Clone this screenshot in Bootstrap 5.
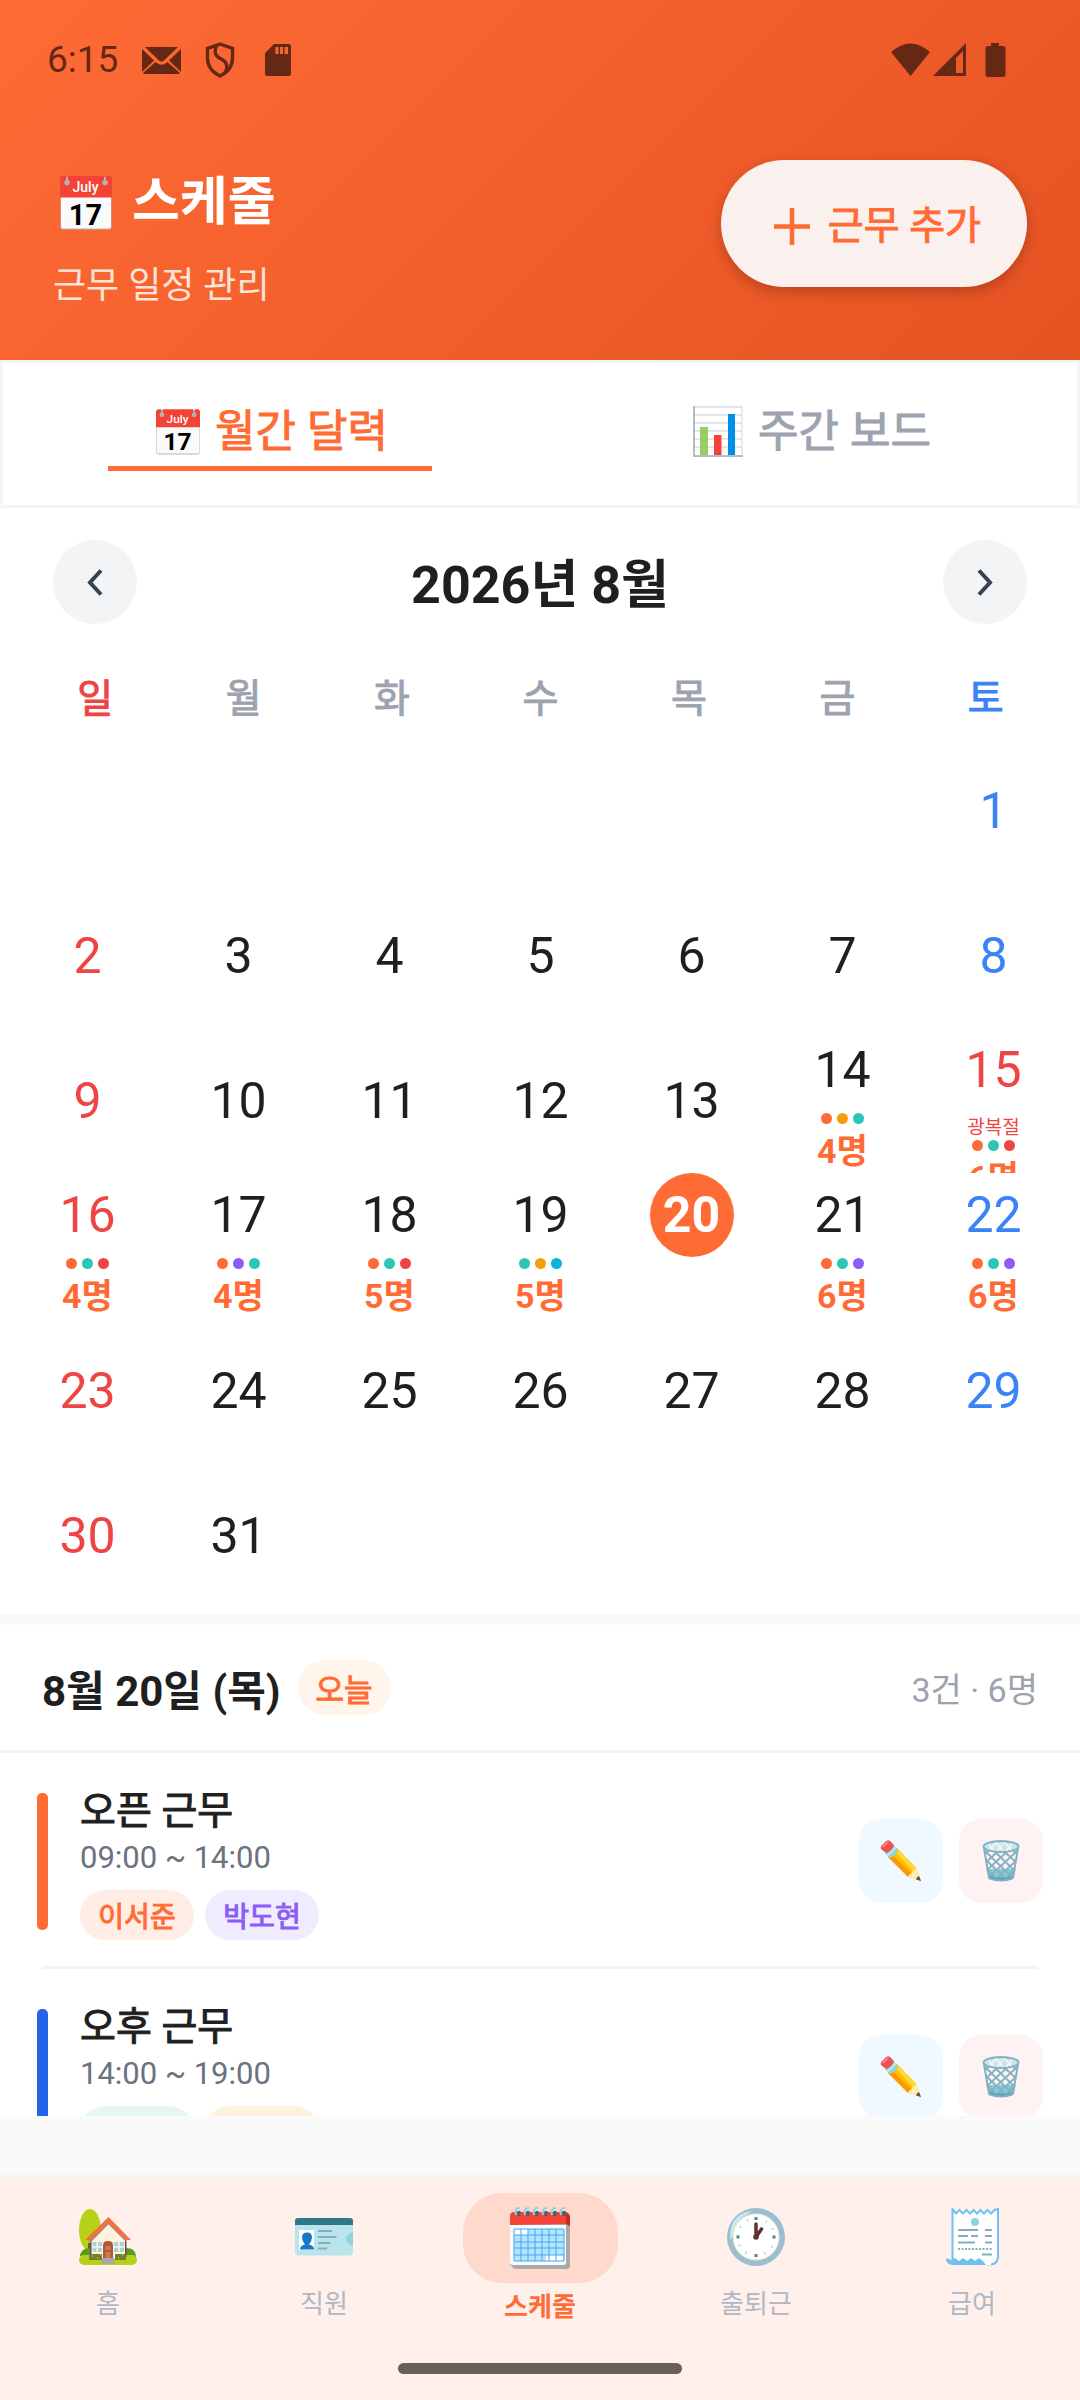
<!DOCTYPE html>
<html lang="ko">
<head>
<meta charset="utf-8">
<meta name="viewport" content="width=device-width, initial-scale=1">
<title>스케줄</title>
<link href="https://cdn.jsdelivr.net/npm/bootstrap@5.3.0/dist/css/bootstrap.min.css" rel="stylesheet">
<style>
:root{--brand:#ff6b35;--ink:#1f1f1f;--muted:#9ca3af}
body{font-family:Roboto,"Noto Sans CJK KR",sans-serif;color:var(--ink);background:#fafafa}
button{font-family:inherit}
/* semi-bold look for Hangul, between the regular and bold cuts */
.add-btn,.view-tab,.weekdays,.today-pill,.shift-name,.chip{font-weight:400;-webkit-text-stroke:1px currentColor}
.app-shell{height:100vh;overflow:hidden}
.app-header{background:linear-gradient(135deg,#ff6b35,#e55323);padding-bottom:49px;flex:none}
.status-bar{height:120px;padding:0 74px 0 47px;color:#652815}
.status-time{font-size:37px;line-height:44px;margin-right:24px}
.status-bar svg{display:block}
.header-row{padding:40px 53px 0}
.header-text{padding-top:3px}
.page-title{font-size:52px;line-height:80px;font-weight:700;color:#fff;gap:20px}
.page-title svg{margin-left:7px}
.page-sub{font-size:36px;line-height:50px;margin-top:18px;color:#ffe3d9}
.add-btn{height:127px;padding:6px 46px 0 53px;border:0;border-radius:64px;background:#faf0ed;color:var(--brand);font-size:39px;gap:18px;box-shadow:0 5px 14px rgba(80,20,0,.3)}
.view-tabs{height:148px;flex:none;background:#fff;box-shadow:inset 0 0 0 3px #f3f4f6}
.view-tab{border:0;background:none;font-size:44px;line-height:64px;color:var(--muted);gap:15px;padding:32px 0 0 4px;height:111px}
.view-tab.active{color:var(--brand);position:relative}
.view-tab.active::after{content:"";position:absolute;left:20%;right:20%;bottom:0;height:5px;background:var(--brand)}
.month-nav{padding:32px 53px}
.nav-round{width:84px;height:84px;border:0;border-radius:50%;background:#f3f4f6;padding:0}
.month-title{font-size:52px;line-height:72px;font-weight:700;padding-top:8px}
.weekdays,.month-grid{display:grid;grid-template-columns:repeat(7,1fr)}
.weekdays{padding:21px 20px 17px 21px;font-size:39px;line-height:44px;color:var(--muted);text-align:center}
.month-grid{padding:0 11px 6px 12px;grid-auto-rows:145px}
.day-cell{border:0;background:none;padding:0;overflow:hidden;color:var(--ink);display:flex;flex-direction:column;align-items:center;justify-content:center}
.day-cell.has-shifts{justify-content:flex-start}
.day-num{flex:none;width:84px;height:84px;border-radius:50%;font-size:50px;line-height:85px;text-align:center}
.is-sun{color:#ef4444}.is-sat{color:#3b82f6}
.is-today .day-num{background:var(--brand);color:#fff;font-weight:700}
.holiday{font-size:19px;line-height:31px;height:27px;flex:none}
.dots{gap:5px;flex:none;margin-top:1px}
.dots i{width:11px;height:11px;border-radius:50%}
.d-o{background:#ff6b35}.d-t{background:#2ec4b6}.d-r{background:#ef4444}.d-p{background:#8b5cf6}.d-y{background:#f59e0b}.d-c{background:#06b6d4}
.head-count{font-size:34px;line-height:44px;font-weight:700;color:var(--brand);margin-top:5px;flex:none}
.day-panel{margin-top:11px;margin-bottom:63px;min-height:0;overflow:hidden}
.day-head{height:128px;padding:0 42px;border-bottom:3px solid #f3f4f6}
.day-date{font-size:42px;line-height:60px;font-weight:700;padding-top:8px}
.today-pill{height:55px;line-height:61px;padding:0 18px;border-radius:28px;background:#fff5eb;color:var(--brand);font-size:31px;margin-left:17px}
.day-sum{font-size:34px;color:var(--muted);padding-top:5px}
.shift-row{padding:29px 37px 26px;gap:32px}
.shift-rule{height:3px;margin:0 42px;background:#f3f4f6}
.shift-bar{width:11px;height:137px;border-radius:5px;align-self:center;flex:none}
.shift-name{font-size:39px;line-height:54px;padding-top:2px}
.shift-time{font-size:31px;line-height:40px;color:#6b7280}
.chips{gap:11px;margin-top:12px}
.chip{height:50px;min-width:114px;line-height:56px;padding:0 18px;border-radius:25px;font-size:28px;text-align:center}
.chip-o{background:#ffede6;color:#ff6b35}.chip-p{background:#f0ebfe;color:#8b5cf6}.chip-t{background:#e5f7f5}.chip-y{background:#fef1df}
.icon-btn{width:84px;height:84px;border:0;border-radius:22px;padding:0}
.icon-btn.edit{background:#f0f9ff}.icon-btn.del{background:#fef2f2}
.bottom-nav{height:221px;background:#fff0eb;box-shadow:0 -2px 6px rgba(0,0,0,.05);padding-top:14px}
.nav-tab{color:#b0b8c6;font-size:26px;line-height:38px;text-decoration:none;gap:5px}
.nav-icon{width:155px;height:87px;border-radius:39px}
.nav-tab.active{color:var(--brand);font-weight:700}
.nav-tab.active .nav-icon{height:90px;background:#ffd9cc}
.home-bar{width:284px;height:11px;border-radius:6px;background:#68605c;margin:0 auto 26px}
</style>
<script src="https://cdn.jsdelivr.net/npm/bootstrap@5.3.0/dist/js/bootstrap.bundle.min.js"></script>
</head>
<body>
<svg width="0" height="0" class="position-absolute" aria-hidden="true">
  <defs>
    <symbol id="i-july" viewBox="0 0 52 54">
      <rect x=".5" y="1" width="51" height="52.5" rx="2.5" fill="#b0b4b6"/>
      <rect x="1" y="12" width="50" height="40.5" rx="2" fill="#fafafa"/>
      <path d="M3 0h3v4a2.8 2.8 0 1 0 2 0V0h36v4a2.8 2.8 0 1 0 2 0V0h3q3 0 3 3v18.500H0V3q0-3 3-3z" fill="#f44336"/>
      <g stroke="none"><text x="25.500" y="16" font-family="Roboto" font-weight="500" font-size="14" text-anchor="middle" fill="#fff">July</text>
      <text x="25.500" y="48.500" font-family="Roboto" font-weight="700" font-size="29" text-anchor="middle" fill="#000">17</text></g>
    </symbol>
    <symbol id="i-pencil" viewBox="0 0 42 42">
      <path d="M8 17L17 8 36.500 28 41 41 28 36.500z" fill="#ffc107"/>
      <path d="M8 17l3.500-3.500L32 34l-4 3z" fill="#ff9800"/>
      <path d="M14 10.500L17 8l20 21-3 3z" fill="#ffd835"/>
      <path d="M37 28.500L41 41 28 36.500q1.500-3 4-3.500.5-3 5-4.500z" fill="#ffecb3"/>
      <path d="M39 36l2 5-5-1.500q.5-3 3-3.500z" fill="#555"/>
      <path d="M5 13l8-8 5 5q-1 5-8 8z" fill="#90d2de"/>
      <path d="M7.500 15.500l8-8" stroke="#c5e8ee" stroke-width="2"/>
      <path d="M1 9Q0 7 2 5l3-3q3-3 5-1l4 4q-1 5-8 8z" fill="#ef5350"/>
      <path d="M2 6l4-4q2-1 3 0L3 8z" fill="#f48384"/>
    </symbol>
    <symbol id="i-trash" viewBox="0 0 38 42">
      <path d="M5 29h28l-2.500 10q-11.500 4-23 0z" fill="#82cbd9"/>
      <path d="M6.500 35q12 5 25 0l-1 4q-11.500 4-23 0z" fill="#5398ab"/>
      <path d="M3 14l7-6M4 22L20 8M5 30L29 8M7 37L35 11M15 38L34 21M24 38l9-8M28 8l7 6M18 8l16 14M9 8l24 23M3 11l28 27M4 20l19 18M5 29l9 9" stroke="#82b1c4" stroke-width="1.800" fill="none"/>
      <path d="M2 8l5 30q12 5 24 0l5-30" fill="none" stroke="#82b1c4" stroke-width="2"/>
      <ellipse cx="19" cy="6.500" rx="17.500" ry="5.500" fill="#c5e6ec" stroke="#82b1c4" stroke-width="2"/>
      <path d="M7 5l5 5M14 3l7 8M23 3l6 7M30 4l-6 7M22 3l-7 8M14 3L8 9" stroke="#fef2f2" stroke-width="1.600"/>
    </symbol>
  </defs>
</svg>

<div class="app-shell d-flex flex-column">
  <header class="app-header">
    <div class="status-bar d-flex align-items-center">
      <span class="status-time">6:15</span>
      <svg width="39" height="27" viewBox="0 0 39 27" fill="currentColor"><path d="M3 0h33l-14 13.500q-2.500 2-5 0zM0 2l12 11.500L0 25zM39 2L27 13.500 39 25zM13.500 15q6 5.500 12 0L38 26q-1 1-2 1H3q-1 0-2-1z"/></svg>
      <svg class="ms-4" width="30" height="36" viewBox="0 0 30 36" fill="none" stroke="currentColor" stroke-width="3.400"><path d="M15 2L2.500 6.500V16Q2.500 28 15 34 27.500 28 27.500 16V6.500z"/><path d="M12 3Q7 13 16 17 25 21 20 31"/></svg>
      <svg class="ms-auto me-0 order-1" width="115" height="35" viewBox="0 0 115 35" fill="currentColor"><path d="M0 9Q19.500-8 39 9L19.500 33z"/><path d="M75 0v33H42zm-3 8l-7 7v15h7z" fill-rule="evenodd"/><path d="M100 0h8v3h4q2.500 0 2.500 2.500v26q0 2.500-2.500 2.500H97q-2.500 0-2.500-2.500v-26Q94.500 3 97 3h3z"/></svg>
      <svg width="56" height="32" viewBox="-30 0 56 32" fill="currentColor"><path fill-rule="evenodd" d="M9 0h14.500Q26 0 26 2.500v27Q26 32 23.500 32h-21Q0 32 0 29.500V9zm1.500 3v7h3V3zm4.500 0v7h3V3zm4.500 0v7H23V3z"/></svg>
    </div>
    <div class="header-row d-flex justify-content-between align-items-start">
      <div class="header-text">
        <h1 class="page-title d-flex align-items-center m-0"><svg width="52" height="54"><use href="#i-july"/></svg>스케줄</h1>
        <p class="page-sub mb-0">근무 일정 관리</p>
      </div>
      <button type="button" class="add-btn d-flex align-items-center"><svg width="36" height="37" viewBox="0 0 36 37" stroke="currentColor" stroke-width="4.500" aria-hidden="true"><path d="M18 0v37M0 18.500h36"/></svg>근무 추가</button>
    </div>
  </header>

  <nav class="view-tabs d-flex">
    <button type="button" class="view-tab active flex-fill w-50 d-flex justify-content-center align-items-center"><svg width="44" height="46"><use href="#i-july"/></svg>월간 달력</button>
    <button type="button" class="view-tab flex-fill w-50 d-flex justify-content-center align-items-center">
      <svg width="50" height="51" viewBox="0 0 50 51"><path fill="#fff" d="M0 0h50v51H0z"/><path d="M0 1h49M0 9h49M0 17h49M0 25h49M0 33h49M0 41h49" stroke="#c3ced3"/><path d="M49 0v50" stroke="#cfd8dc"/><path d="M1 0v50h49" stroke="#b0bec5" stroke-width="2" fill="none"/><path fill="#9ccc65" d="M7 21h8v28H7z"/><path fill="#f44336" d="M21 29h7.500v20H21z"/><path fill="#0090ea" d="M35 8h7v41h-7z"/></svg>주간 보드</button>
  </nav>

  <main class="bg-white flex-shrink-0">
    <div class="month-nav d-flex justify-content-between align-items-center">
      <button type="button" class="nav-round d-flex align-items-center justify-content-center" aria-label="이전 달"><svg width="16" height="27" viewBox="0 0 16 27" fill="none" stroke="#374151" stroke-width="4"><path d="M14 1.500L3 13.500l11 12"/></svg></button>
      <h2 class="month-title mb-0">2026년 8월</h2>
      <button type="button" class="nav-round d-flex align-items-center justify-content-center" aria-label="다음 달"><svg width="16" height="27" viewBox="0 0 16 27" fill="none" stroke="#374151" stroke-width="4"><path d="M2 1.500l11 12-11 12"/></svg></button>
    </div>
    <div class="weekdays"><span class="is-sun">일</span><span>월</span><span>화</span><span>수</span><span>목</span><span>금</span><span class="is-sat">토</span></div>
    <div class="month-grid">
      <span></span><span></span><span></span><span></span><span></span><span></span>
      <button type="button" class="day-cell is-sat"><span class="day-num">1</span></button>
      <button type="button" class="day-cell is-sun"><span class="day-num">2</span></button>
      <button type="button" class="day-cell"><span class="day-num">3</span></button>
      <button type="button" class="day-cell"><span class="day-num">4</span></button>
      <button type="button" class="day-cell"><span class="day-num">5</span></button>
      <button type="button" class="day-cell"><span class="day-num">6</span></button>
      <button type="button" class="day-cell"><span class="day-num">7</span></button>
      <button type="button" class="day-cell is-sat"><span class="day-num">8</span></button>
      <button type="button" class="day-cell is-sun"><span class="day-num">9</span></button>
      <button type="button" class="day-cell"><span class="day-num">10</span></button>
      <button type="button" class="day-cell"><span class="day-num">11</span></button>
      <button type="button" class="day-cell"><span class="day-num">12</span></button>
      <button type="button" class="day-cell"><span class="day-num">13</span></button>
      <button type="button" class="day-cell has-shifts"><span class="day-num">14</span><span class="dots d-flex"><i class="d-o"></i><i class="d-y"></i><i class="d-t"></i></span><span class="head-count">4명</span></button>
      <button type="button" class="day-cell has-shifts is-sun"><span class="day-num">15</span><span class="holiday">광복절</span><span class="dots d-flex"><i class="d-o"></i><i class="d-t"></i><i class="d-r"></i></span><span class="head-count">6명</span></button>
      <button type="button" class="day-cell has-shifts is-sun"><span class="day-num">16</span><span class="dots d-flex"><i class="d-o"></i><i class="d-t"></i><i class="d-r"></i></span><span class="head-count">4명</span></button>
      <button type="button" class="day-cell has-shifts"><span class="day-num">17</span><span class="dots d-flex"><i class="d-o"></i><i class="d-p"></i><i class="d-t"></i></span><span class="head-count">4명</span></button>
      <button type="button" class="day-cell has-shifts"><span class="day-num">18</span><span class="dots d-flex"><i class="d-o"></i><i class="d-t"></i><i class="d-r"></i></span><span class="head-count">5명</span></button>
      <button type="button" class="day-cell has-shifts"><span class="day-num">19</span><span class="dots d-flex"><i class="d-t"></i><i class="d-y"></i><i class="d-c"></i></span><span class="head-count">5명</span></button>
      <button type="button" class="day-cell has-shifts is-today"><span class="day-num">20</span></button>
      <button type="button" class="day-cell has-shifts"><span class="day-num">21</span><span class="dots d-flex"><i class="d-o"></i><i class="d-t"></i><i class="d-p"></i></span><span class="head-count">6명</span></button>
      <button type="button" class="day-cell has-shifts is-sat"><span class="day-num">22</span><span class="dots d-flex"><i class="d-o"></i><i class="d-t"></i><i class="d-p"></i></span><span class="head-count">6명</span></button>
      <button type="button" class="day-cell is-sun"><span class="day-num">23</span></button>
      <button type="button" class="day-cell"><span class="day-num">24</span></button>
      <button type="button" class="day-cell"><span class="day-num">25</span></button>
      <button type="button" class="day-cell"><span class="day-num">26</span></button>
      <button type="button" class="day-cell"><span class="day-num">27</span></button>
      <button type="button" class="day-cell"><span class="day-num">28</span></button>
      <button type="button" class="day-cell is-sat"><span class="day-num">29</span></button>
      <button type="button" class="day-cell is-sun"><span class="day-num">30</span></button>
      <button type="button" class="day-cell"><span class="day-num">31</span></button>
    </div>
  </main>

  <section class="day-panel bg-white flex-fill">
    <div class="day-head d-flex align-items-center">
      <h3 class="day-date mb-0">8월 20일 (목)</h3><span class="today-pill">오늘</span>
      <span class="day-sum ms-auto">3건 · 6명</span>
    </div>
    <article class="shift-row d-flex">
      <span class="shift-bar" style="background:#ff6b35"></span>
      <div class="flex-fill">
        <h4 class="shift-name mb-0">오픈 근무</h4>
        <div class="shift-time">09:00 ~ 14:00</div>
        <div class="chips d-flex"><span class="chip chip-o">이서준</span><span class="chip chip-p">박도현</span></div>
      </div>
      <div class="d-flex gap-3 align-self-center">
        <button type="button" class="icon-btn edit" aria-label="수정"><svg width="42" height="42"><use href="#i-pencil"/></svg></button>
        <button type="button" class="icon-btn del" aria-label="삭제"><svg width="38" height="42"><use href="#i-trash"/></svg></button>
      </div>
    </article>
    <div class="shift-rule"></div>
    <article class="shift-row d-flex">
      <span class="shift-bar" style="background:#2563eb"></span>
      <div class="flex-fill">
        <h4 class="shift-name mb-0">오후 근무</h4>
        <div class="shift-time">14:00 ~ 19:00</div>
        <div class="chips d-flex"><span class="chip chip-t"></span><span class="chip chip-y"></span></div>
      </div>
      <div class="d-flex gap-3 align-self-center">
        <button type="button" class="icon-btn edit" aria-label="수정"><svg width="42" height="42"><use href="#i-pencil"/></svg></button>
        <button type="button" class="icon-btn del" aria-label="삭제"><svg width="38" height="42"><use href="#i-trash"/></svg></button>
      </div>
    </article>
  </section>

  <footer class="bottom-nav d-flex flex-column justify-content-between flex-shrink-0">
    <nav class="row g-0">
      <a href="#" class="nav-tab col d-flex flex-column align-items-center"><span class="nav-icon d-flex align-items-center justify-content-center">
        <svg width="58" height="56" viewBox="0 0 58 56"><ellipse cx="11" cy="21" rx="11" ry="21" fill="#b7d118"/><path d="M9 34h4v13H9z" fill="#795548"/><path d="M1 47q1-8 10-8l36 0q10 0 10 9z" fill="#5a9a1e"/><rect y="46" width="58" height="10" rx="5" fill="#b7d118"/><path d="M11 32L29.500 14 47 32v18H11z" fill="#fff3e0"/><path d="M11 32v16h1.500V32zM46 32v16h1.500V32z" fill="#6d4c41"/><path d="M10 32L29.500 12.500 48 31" stroke="#a98a75" stroke-width="4" fill="none"/><path d="M6 31L29.500 8 52 31l-5 0L29.500 13.500 11 31z" fill="#f4703c"/><path d="M13.500 33h9.500v10h-9.500zM35 33h10v10H35z" fill="#a5d3d8"/><path d="M18.200 33v10M13.500 38H23M40 33v10M35 38h10" stroke="#fff3e0" stroke-width="1.500"/><path d="M24 50V36q0-4 5-4t5 4v14z" fill="#b1573a"/><path d="M26.500 37h5v4h-5zM26.500 43h5v6h-5z" fill="#cf7752"/><path d="M10 45h13v6H10zM36 45h11v6H36z" fill="#71802f"/><path d="M13 47h1M18 49h1M21 46h1M39 49h1M43 46h1" stroke="#ffb300" stroke-width="1.500"/><path d="M23 49h12l1 6H22z" fill="#a8a8a8"/></svg></span><span>홈</span></a>
      <a href="#" class="nav-tab col d-flex flex-column align-items-center"><span class="nav-icon d-flex align-items-center justify-content-center">
        <svg width="58" height="38" viewBox="0 0 58 38"><rect width="58" height="37.500" rx="3" fill="#b9e4ea"/><path d="M0 7V3q0-3 3-3h52q3 0 3 3v4z" fill="#2f7889"/><path d="M4 12h15v20H4z" fill="#fff"/><path d="M5 31.500q0-4 5-5-3-4-3-7 0-5 5-5t5 5q0 3-3 7 5 1 5 5z" fill="#1479c7"/><path d="M23 13h14M23 19h18.500M23 25h12.500M23 30.500h9" stroke="#82aec0" stroke-width="2"/><path d="M58 14q-7 2-7 7t7 7z" fill="#94d1e0"/></svg></span><span>직원</span></a>
      <a href="#" class="nav-tab active col d-flex flex-column align-items-center"><span class="nav-icon d-flex align-items-center justify-content-center">
        <svg width="60" height="62" viewBox="0 0 60 62"><path d="M4 5h50q6 0 6 5v49q0 3-3 3H6q-3 0-6-5z" fill="#a9a9a9"/><path d="M0 18h56v37q0 3-3 3H3q-3 0-3-3z" fill="#fafafa"/><path d="M0 18v-9q0-4 4-4h52q4 1 4 6v8l-3-2z" fill="#f44336"/><path d="M56 6q4 1 4 5v8l-4-2z" fill="#c62828"/><path d="M4 22h50v32H4z" fill="#b3e5fc"/><path d="M4 22h14v6H4zM36 48h17v6H36z" fill="#fff"/><path d="M4 22h50v32H4zM4 28h50M4 35h50M4 41h50M4 48h50M11 22v32M18 22v32M25 22v32M32 22v32M39 22v32M46 22v32" stroke="#42a5f5" fill="none"/><path d="M9 4v5M18 4v5M27 4v5M36 4v5M45 4v5M54 4v5" stroke="#286f7d" stroke-width="3"/><path d="M6 8Q4 1 10 1M15 8q-2-7 4-7M24 8q-2-7 4-7M33 8q-2-7 4-7M42 8q-2-7 4-7M51 8q-2-7 4-7" stroke="#90d2de" stroke-width="2" fill="none"/></svg></span><span>스케줄</span></a>
      <a href="#" class="nav-tab col d-flex flex-column align-items-center"><span class="nav-icon d-flex align-items-center justify-content-center">
        <svg width="58" height="58" viewBox="0 0 58 58"><circle cx="29" cy="29" r="29" fill="#99bfd0"/><path d="M3 30Q2 6 25 3q-3 3-9 6Q8 16 4 32z" fill="#c5e7f2"/><circle cx="29" cy="29" r="23" fill="#fff" stroke="#ffe8c8"/><circle cx="29" cy="29" r="18.500" fill="none" stroke="#9fbecb" stroke-width="2.500" stroke-dasharray="1 8.690"/><path d="M29 9v3M29 46v3M9.500 29h3M45.500 29h3" stroke="#4c8b9b" stroke-width="3"/><path d="M29 29V16M29 29l5.500-8" stroke="#5d342c" stroke-width="3.500" stroke-linecap="round"/><circle cx="29" cy="29" r="2.800" fill="#5d342c"/></svg></span><span>출퇴근</span></a>
      <a href="#" class="nav-tab col d-flex flex-column align-items-center"><span class="nav-icon d-flex align-items-center justify-content-center">
        <svg width="53" height="58" viewBox="0 0 53 58"><path d="M7 1l3 4 3-4 3 4 3-4 3 4 3-4 3 4 3-4 3 4 3-4 3 4 3-4 3 4 3-4 3 4V49q0 7-7 8H9l-2-4z" fill="#fff"/><path d="M6.500 52V1l3.500 4.500L13.500 2 17 5.500 20.500 2 24 5.500 27.500 2 31 5.500 34.500 2 38 5.500 41.500 2 45 5.500 48.500 2 52 1v47q0 8-7 8.500" fill="none" stroke="#70c0f0" stroke-width="2"/><path d="M0 50l5 2 4-2 4 3 4-3 4 3 4-3 4 3 4-3 5 4q2 5 7 3H7q-7 0-7-7z" fill="#70c0f0"/><circle cx="29" cy="14" r="4" fill="#90d2e0"/><path d="M12 22h20M39 22h7M12 28h10M25 28h7M39 28h7M12 34.500h17M39 34.500h7M36 46.500h10" stroke="#82aec0" stroke-width="2"/><path d="M12 41h34" stroke="#82aec0" stroke-width="2" stroke-dasharray="2 1.500"/></svg></span><span>급여</span></a>
    </nav>
    <div class="home-bar"></div>
  </footer>
</div>
</body>
</html>
